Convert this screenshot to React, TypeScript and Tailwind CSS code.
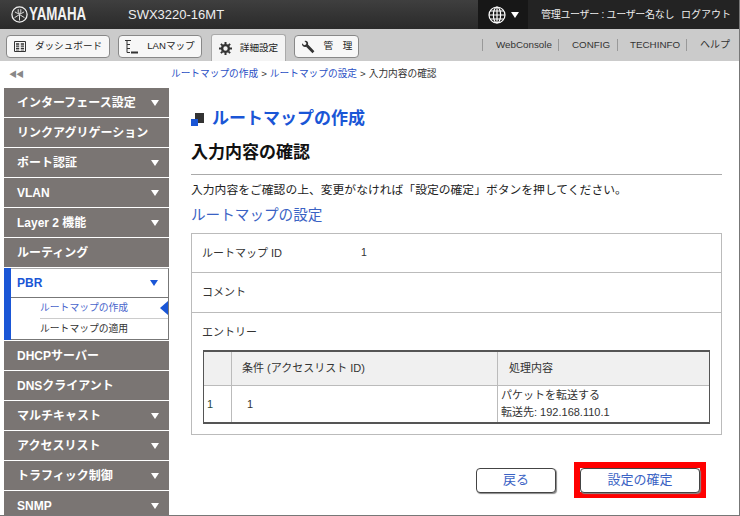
import React from 'react';

const font = { fontFamily: '"Liberation Sans", "Noto Sans CJK JP", sans-serif' };

function MenuItem({ label, arrow = true }: { label: string; arrow?: boolean }) {
    return (
        <div className="h-[29px] mb-px flex items-center justify-between pl-[13px] pr-[10px] bg-[#7a7573] text-white text-[12px] font-bold">
            <span>{label}</span>
            {arrow && <span className="w-0 h-0 border-x-[4px] border-x-transparent border-t-[6px] border-t-white" />}
        </div>
    );
}

function Tab({ label, icon, active = false, width }: { label: string; icon: React.ReactNode; active?: boolean; width: string }) {
    if (active) {
        return (
            <div className={`${width} h-[27px] mt-[5px] flex items-center justify-center gap-2 bg-[#f4f4f4] border border-b-0 border-[#aaa] rounded-t-[3px] text-[9.6px] text-[#222]`}>
                {icon}
                <span>{label}</span>
            </div>
        );
    }
    return (
        <div className={`${width} h-[23px] mt-[6px] flex items-center justify-center gap-[9px] bg-[#f7f7f7] border border-[#888] rounded-[4px] text-[9.6px] text-[#222]`}>
            {icon}
            <span>{label}</span>
        </div>
    );
}

export default function App() {
    return (
        <div className="w-[740px] h-[516px] overflow-hidden bg-white border-r border-b border-[#777] flex flex-col text-[#333]" style={font}>
            {/* header */}
            <div className="h-[29px] shrink-0 flex bg-gradient-to-b from-[#3f3f3f] to-[#2a2a2a] text-white">
                <div className="w-[478px] flex items-center pl-[11px]">
                    <svg width="17" height="17" viewBox="0 0 17 17" fill="none" stroke="#f2f2f2">
                        <circle cx="8.5" cy="8.5" r="7.6" strokeWidth="1.3" />
                        <g strokeWidth="0.9">
                            <path d="M8.5 8.5v6M7.2 3.2v3.2q0 1.2 1.3 1.2t1.3-1.2V3.2" />
                            <path d="M8.5 8.5l-5 3.2M3.9 5.9l2.8 1.6q1 .6 1.6-.4" />
                            <path d="M8.5 8.5l5 3.2M13.1 5.9l-2.8 1.6q-1 .6-1.6-.4" />
                        </g>
                    </svg>
                    <span className="ml-[1px] w-[58px] text-[19px] font-bold text-[#f2f2f2] inline-block origin-left scale-x-[0.7] whitespace-nowrap">YAMAHA</span>
                    <span className="ml-[41px] text-[13px] text-[#eee]">SWX3220-16MT</span>
                </div>
                <div className="w-[50px] bg-[#171717] flex items-center justify-center gap-[5px]">
                    <svg width="18" height="18" viewBox="0 0 18 18" fill="none" stroke="#fff" strokeWidth="1.2">
                        <circle cx="9" cy="9" r="8" />
                        <ellipse cx="9" cy="9" rx="3.6" ry="8" />
                        <path d="M9 1v16M1 9h16M2.2 5h13.6M2.2 13h13.6" />
                    </svg>
                    <span className="w-0 h-0 border-x-[4px] border-x-transparent border-t-[6px] border-t-white" />
                </div>
                <div className="flex-1 bg-[#232323] flex items-center pl-[13px] text-[10px] text-[#eee] whitespace-nowrap">
                    <span className="w-[140px] tracking-[-0.3px]">管理ユーザー : ユーザー名なし</span>
                    <span>ログアウト</span>
                </div>
            </div>

            {/* toolbar */}
            <div className="h-[32px] shrink-0 flex bg-[#cbcbcb] pl-[6px]">
                <div className="flex gap-[8px]">
                    <Tab
                        width="w-[104px]"
                        label="ダッシュボード"
                        icon={
                            <svg width="12" height="11" viewBox="0 0 12 11" fill="none" stroke="#333">
                                <path d="M.5.5h11v10H.5z" />
                                <path d="M2 3h3.2M2 5.2h3.2M2 7.4h3.2M6.8 3H10M6.8 5.2H10M6.8 7.4H10" strokeWidth="1.3" />
                                <path d="M2 9h3.2M6.8 9H10" strokeWidth="0.8" />
                            </svg>
                        }
                    />
                    <Tab
                        width="w-[84px]"
                        label="LANマップ"
                        icon={
                            <svg width="13" height="14" viewBox="0 0 13 14" fill="none" stroke="#333">
                                <path d="M0 .5h6M2 .5v12M2 4.5h3M2 8.5h3M2 12.5h3" />
                                <path d="M6 12.5h7" strokeWidth="2" />
                            </svg>
                        }
                    />
                    <div className="ml-px">
                        <Tab
                            active
                            width="w-[75px]"
                            label="詳細設定"
                            icon={
                                <svg width="13" height="13" viewBox="0 0 13 13">
                                    <circle cx="6.5" cy="6.5" r="3.4" fill="none" stroke="#333" strokeWidth="2.4" />
                                    <path d="M6.5 0v13M0 6.5h13M1.9 1.9l9.2 9.2M11.1 1.9l-9.2 9.2" stroke="#333" strokeWidth="2" strokeDasharray="2.4 8.5" />
                                </svg>
                            }
                        />
                    </div>
                    <Tab
                        width="w-[65px]"
                        label="管　理"
                        icon={
                            <svg width="14" height="14" viewBox="0 0 14 14" fill="#333">
                                <path d="M1 3.2 3.2 5.2 5 4.6 5.4 2.9 3.4.9Q5.4.3 6.6 1.8 7.5 3 7 4.6L13.4 11.2 11.5 13.2 5.1 6.7Q3.4 7.3 2 6.2.7 5 1 3.2Z" />
                            </svg>
                        }
                    />
                </div>
                <div className="ml-auto mt-[7px] h-[17px] flex items-center text-[9.8px] text-[#333] pr-[9px] whitespace-nowrap">
                    <span className="w-[76px] h-[12px] border-l border-[#999] pl-[13px] leading-[12px]">WebConsole</span>
                    <span className="w-[59px] h-[12px] border-l border-[#999] pl-[13px] leading-[12px]">CONFIG</span>
                    <span className="w-[69px] h-[12px] border-l border-[#999] pl-[12px] leading-[12px]">TECHINFO</span>
                    <span className="w-[44px] h-[12px] border-l border-[#999] pl-[13px] leading-[12px] text-[10px]">ヘルプ</span>
                </div>
            </div>

            <div className="flex-1 flex min-h-0">
                {/* sidebar */}
                <div className="w-[170px] shrink-0 pl-[4px] pr-px overflow-hidden">
                    <div className="h-[27px] pl-[5px] flex items-center text-[8px] text-[#888] tracking-[-1px]">◀◀</div>
                    <MenuItem label="インターフェース設定" />
                    <MenuItem label="リンクアグリゲーション" arrow={false} />
                    <MenuItem label="ポート認証" />
                    <MenuItem label="VLAN" />
                    <MenuItem label="Layer 2 機能" />
                    <MenuItem label="ルーティング" arrow={false} />
                    <div className="border-l-[7px] border-[#1a56d6] mb-px">
                        <div className="border-r border-b border-t border-t-[#aaa] border-r-[#777] border-b-[#777]">
                            <div className="h-[29px] flex items-center justify-between pl-[6px] pr-[10px] text-[12px] font-bold text-[#1a56d6] border-b border-[#777]">
                                <span>PBR</span>
                                <span className="w-0 h-0 border-x-[4px] border-x-transparent border-t-[6px] border-t-[#1a56d6]" />
                            </div>
                            <div className="pl-[29px] text-[9.8px]">
                                <div className="h-[21px] flex items-center justify-between border-b border-[#ccc] text-[#4a66cc]">
                                    <span>ルートマップの作成</span>
                                    <span className="w-0 h-0 border-y-[7px] border-y-transparent border-r-[8px] border-r-[#1a56d6]" />
                                </div>
                                <div className="h-[20px] flex items-center text-[#333]">ルートマップの適用</div>
                            </div>
                        </div>
                    </div>
                    <MenuItem label="DHCPサーバー" arrow={false} />
                    <MenuItem label="DNSクライアント" arrow={false} />
                    <MenuItem label="マルチキャスト" />
                    <MenuItem label="アクセスリスト" />
                    <MenuItem label="トラフィック制御" />
                    <MenuItem label="SNMP" />
                </div>

                {/* main */}
                <div className="flex-1 min-w-0">
                    <div className="h-[27px] pl-px flex items-center text-[9.7px] text-[#333]">
                        <span className="text-[#2a4fc4]">ルートマップの作成</span>
                        <span className="mx-[3px]">&gt;</span>
                        <span className="text-[#2a4fc4]">ルートマップの設定</span>
                        <span className="mx-[3px]">&gt;</span>
                        <span>入力内容の確認</span>
                    </div>
                    <div className="pl-[21px] pr-[17px]">
                        <div className="mt-[19px] h-[24px] flex items-center">
                            <span className="relative w-[13px] h-[13px] mr-[8px]">
                                <span className="absolute right-0 top-0 w-[9px] h-[10px] bg-[#333]" />
                                <span className="absolute left-0 bottom-0 w-[7px] h-[7px] bg-[#1a56d6]" />
                            </span>
                            <h1 className="text-[17px] font-bold text-[#1a56d6]">ルートマップの作成</h1>
                        </div>
                        <h2 className="mt-[10px] h-[24px] leading-[24px] text-[17px] font-bold text-[#111]">入力内容の確認</h2>
                        <div className="mt-[9px] border-t border-[#aaa] pt-[7px] h-[26px] text-[11.8px] leading-[17px] text-[#222] whitespace-nowrap">
                            入力内容をご確認の上、変更がなければ「設定の確定」ボタンを押してください。
                        </div>
                        <div className="h-[24px] leading-[24px] mt-[3px] text-[14.6px] text-[#3a62c4]">ルートマップの設定</div>
                        <div className="mt-[6px] h-[202px] border border-[#bbb] text-[11px] text-[#333]">
                            <div className="h-[39px] flex items-center border-b border-[#bbb] pl-[10px]">
                                <span className="w-[159px]">ルートマップ ID</span>
                                <span className="text-[10.5px]">1</span>
                            </div>
                            <div className="h-[40px] flex items-center border-b border-[#bbb] pl-[10px]">コメント</div>
                            <div className="h-[38px] -mb-px flex items-center pl-[10px]">エントリー</div>
                            <div className="ml-[11px] mr-[11px] border border-[#555] border-t-2 border-b-2">
                                <div className="grid grid-cols-[28px_266px_1fr] h-[34px] bg-[#f0f0f0] border-b border-[#bbb]">
                                    <div className="border-r border-[#bbb]" />
                                    <div className="border-r border-[#bbb] pl-[10px] flex items-center">条件 (アクセスリスト ID)</div>
                                    <div className="pl-[11px] flex items-center">処理内容</div>
                                </div>
                                <div className="grid grid-cols-[28px_266px_1fr] h-[36px] bg-white">
                                    <div className="border-r border-[#bbb] pl-[3px] flex items-center text-[#2a4a3a]">1</div>
                                    <div className="border-r border-[#bbb] pl-[15px] flex items-center">1</div>
                                    <div className="pl-[3px] flex flex-col justify-center leading-[17px]">
                                        <span>パケットを転送する</span>
                                        <span>転送先: 192.168.110.1</span>
                                    </div>
                                </div>
                            </div>
                        </div>
                        <div className="mt-[27px] flex items-center pl-[285px] gap-[18px]">
                            <button className="w-[80px] h-[25px] bg-white border border-[#444] rounded-[4px] shadow-[1px_1px_1px_#888] text-[13px] text-[#3a62c4]">戻る</button>
                            <div className="border-[6px] border-[#f00] w-[132px] h-[36px] flex items-center justify-center">
                                <button className="w-[120px] h-[25px] bg-white border border-[#444] rounded-[4px] shadow-[1px_1px_1px_#888] text-[13px] text-[#3a62c4]">設定の確定</button>
                            </div>
                        </div>
                    </div>
                </div>
            </div>
        </div>
    );
}
